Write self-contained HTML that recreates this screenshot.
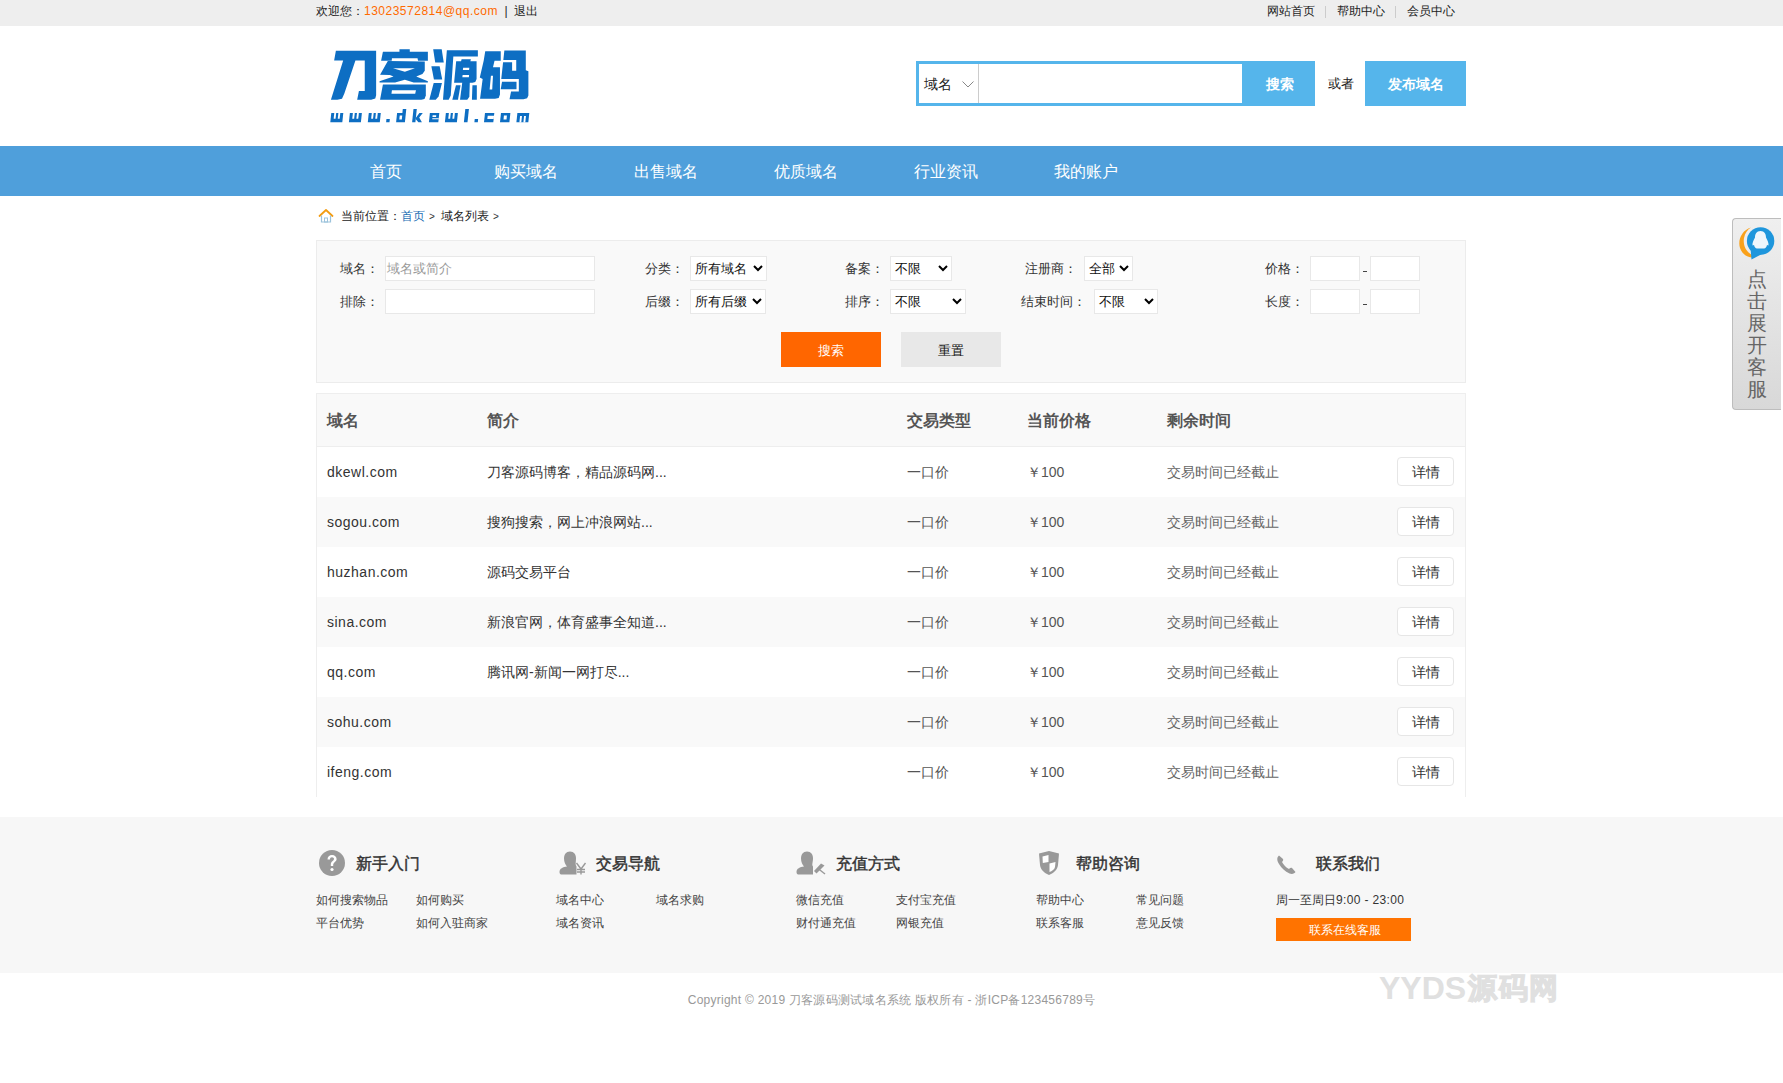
<!DOCTYPE html>
<html><head><meta charset="utf-8">
<style>
*{margin:0;padding:0;box-sizing:border-box}
html,body{width:1783px;height:1083px;overflow:hidden;background:#fff}
body{position:relative;font-family:"Liberation Sans",sans-serif;color:#333}
.a{position:absolute;white-space:nowrap}
.nv{position:absolute;top:147px;height:50px;line-height:50px;font-size:16px;color:#fff;width:140px;text-align:center}
.lb{position:absolute;font-size:13px;line-height:25px;color:#333;white-space:nowrap}
.inp{position:absolute;height:25px;background:#fff;border:1px solid #e8e8e8}
.sel{position:absolute;height:25px;background:#fff;border:1px solid #e8e8e8;font-size:13px;line-height:23px;color:#111;padding-left:4px;white-space:nowrap}
.sel svg{position:absolute;top:8px}
.th{position:absolute;font-size:16px;font-weight:bold;color:#555;line-height:54px;white-space:nowrap}
.td{position:absolute;font-size:14px;color:#666;line-height:50px;white-space:nowrap}
.dm{color:#333;letter-spacing:0.5px}
.ds{color:#333}
.btn{position:absolute;left:1080px;top:10px;width:57px;height:29px;border:1px solid #e6e6e6;border-radius:4px;background:#fff;font-size:14px;line-height:29px;text-align:center;color:#333}
.fh{position:absolute;top:854px;font-size:16px;color:#333;line-height:20px;-webkit-text-stroke:0.45px #333;white-space:nowrap}
.fl{position:absolute;font-size:12px;color:#444;line-height:16px;white-space:nowrap}
</style></head><body>
<div class="a" style="left:0;top:0;width:1783px;height:26px;background:#eee"></div>
<div class="a" style="left:316px;top:-1px;font-size:12px;line-height:24px;color:#222">欢迎您：<span style="color:#ff6a00;letter-spacing:0.5px">13023572814@qq.com</span> &nbsp;|&nbsp; 退出</div>
<div class="a" style="left:1267px;top:-1px;font-size:12px;line-height:24px;color:#222">网站首页</div>
<div class="a" style="left:1337px;top:-1px;font-size:12px;line-height:24px;color:#222">帮助中心</div>
<div class="a" style="left:1407px;top:-1px;font-size:12px;line-height:24px;color:#222">会员中心</div>
<div class="a" style="left:1325px;top:6px;width:1px;height:12px;background:#ccc"></div>
<div class="a" style="left:1395px;top:6px;width:1px;height:12px;background:#ccc"></div>
<svg class="a" style="left:320px;top:40px" width="220" height="70" viewBox="320 40 220 70"><polygon points="335.88,50.83 376.13,50.83 376.13,95.18 375.26,98.38 371.17,99.84 357.17,99.84 358.92,91.09 364.76,91.09 364.76,60.46 355.42,60.46 344.34,93.42 342.00,98.68 337.33,99.84 330.92,99.84 343.17,60.46 334.13,60.46" fill="#0d6ec3"/><polygon points="382.91,51.68 399.45,51.68 399.45,49.36 409.78,49.36 409.78,51.68 427.87,51.68 427.87,60.73 418.05,60.73 417.53,58.14 391.95,58.14 391.70,60.73 381.10,60.73" fill="#0d6ec3"/><polygon points="387.82,60.99 424.77,61.50 424.77,70.81 422.44,73.91 416.24,76.49 427.87,81.14 427.87,82.43 413.66,82.43 404.87,79.85 395.05,82.43 379.55,82.43 379.55,81.14 393.50,76.49 389.89,74.94 380.07,74.68" fill="#0d6ec3"/><polygon points="392.99,68.22 414.95,68.22 404.87,71.84" fill="#fff"/><polygon points="382.91,84.50 425.80,84.50 425.80,95.61 424.51,98.97 421.41,99.75 380.07,99.75" fill="#0d6ec3"/><polygon points="391.95,90.19 415.98,90.19 415.21,93.80 391.44,93.80" fill="#fff"/><polygon points="433.17,49.36 441.70,49.36 443.76,62.54 435.24,62.54" fill="#0d6ec3"/><polygon points="431.36,66.16 439.63,66.16 442.21,79.59 433.94,79.59" fill="#0d6ec3"/><polygon points="433.68,82.95 441.95,82.95 438.59,96.39 435.75,99.75 429.29,99.75" fill="#0d6ec3"/><polygon points="446.86,50.13 477.87,50.13 477.87,56.59 453.32,56.59 450.74,95.61 448.67,99.75 442.99,99.75" fill="#0d6ec3"/><polygon points="456.17,61.25 461.07,61.25 461.59,59.18 470.89,59.18 470.38,61.25 476.58,61.25 476.58,79.07 475.29,81.92 472.44,82.69 454.10,82.69" fill="#0d6ec3"/><polygon points="463.14,67.71 469.34,67.71 469.09,70.03 462.88,70.03" fill="#fff"/><polygon points="462.63,74.94 469.09,74.94 468.83,77.27 462.37,77.27" fill="#fff"/><polygon points="455.91,85.28 460.56,85.28 457.97,99.75 452.29,99.75" fill="#0d6ec3"/><polygon points="462.63,79.59 469.86,79.59 469.34,96.65 467.28,99.75 460.04,99.75" fill="#0d6ec3"/><polygon points="472.44,85.28 476.84,85.28 476.84,99.75 471.93,99.75" fill="#0d6ec3"/><polygon points="485.24,51.17 500.74,51.17 500.74,60.73 494.54,60.73 492.99,67.19 499.96,67.19 499.96,94.58 498.67,97.94 495.05,98.71 480.07,98.71 482.65,79.07 479.81,77.52 483.68,60.73" fill="#0d6ec3"/><polygon points="490.92,75.72 492.99,75.72 492.21,89.41 489.63,89.41" fill="#fff"/><polygon points="504.36,50.39 525.80,50.39 525.80,70.29 528.39,71.32 528.39,95.61 527.10,98.20 523.48,99.23 509.52,99.23 511.07,91.48 518.83,91.48 518.83,79.07 501.26,79.07" fill="#0d6ec3"/><polygon points="503.06,59.95 516.24,59.95 516.24,70.81 512.11,70.81 512.11,62.28 502.81,62.28" fill="#fff"/><polygon points="502.03,81.66 516.50,81.66 516.50,89.15 500.74,89.15" fill="#0d6ec3"/></svg>
<svg class="a" style="left:320px;top:100px" width="220" height="30" viewBox="320 100 220 30"><polygon points="331.29,112.90 343.29,112.90 342.30,122.30 330.30,122.30" fill="#0d6ec3"/><polygon points="334.30,112.80 336.20,112.80 335.57,118.80 333.67,118.80" fill="#fff"/><polygon points="338.40,112.80 340.30,112.80 339.67,118.80 337.77,118.80" fill="#fff"/><polygon points="349.89,112.90 361.89,112.90 360.90,122.30 348.90,122.30" fill="#0d6ec3"/><polygon points="352.90,112.80 354.80,112.80 354.17,118.80 352.27,118.80" fill="#fff"/><polygon points="357.00,112.80 358.90,112.80 358.27,118.80 356.37,118.80" fill="#fff"/><polygon points="368.79,112.90 380.79,112.90 379.80,122.30 367.80,122.30" fill="#0d6ec3"/><polygon points="371.80,112.80 373.70,112.80 373.07,118.80 371.17,118.80" fill="#fff"/><polygon points="375.90,112.80 377.80,112.80 377.17,118.80 375.27,118.80" fill="#fff"/><polygon points="386.44,119.10 389.84,119.10 389.50,122.30 386.10,122.30" fill="#0d6ec3"/><polygon points="397.09,112.90 405.89,112.90 404.90,122.30 396.10,122.30" fill="#0d6ec3"/><polygon points="402.79,109.10 406.29,109.10 405.87,113.10 402.37,113.10" fill="#0d6ec3"/><polygon points="399.73,115.40 402.23,115.40 401.80,119.40 399.30,119.40" fill="#fff"/><polygon points="413.49,109.10 416.79,109.10 415.40,122.30 412.10,122.30" fill="#0d6ec3"/><polygon points="415.75,118.00 419.39,112.90 422.79,112.90 419.22,117.40 421.90,122.30 418.40,122.30 415.66,118.90" fill="#0d6ec3"/><polygon points="429.89,112.90 439.29,112.90 438.30,122.30 428.90,122.30" fill="#0d6ec3"/><polygon points="432.64,115.30 436.24,115.30 436.06,117.00 432.46,117.00" fill="#fff"/><polygon points="432.33,118.20 438.83,118.20 438.72,119.30 432.22,119.30" fill="#fff"/><polygon points="445.89,112.90 457.89,112.90 456.90,122.30 444.90,122.30" fill="#0d6ec3"/><polygon points="448.90,112.80 450.80,112.80 450.17,118.80 448.27,118.80" fill="#fff"/><polygon points="453.00,112.80 454.90,112.80 454.27,118.80 452.37,118.80" fill="#fff"/><polygon points="465.31,108.90 468.91,108.90 467.50,122.30 463.90,122.30" fill="#0d6ec3"/><polygon points="474.74,119.10 478.14,119.10 477.80,122.30 474.40,122.30" fill="#0d6ec3"/><polygon points="484.99,112.90 494.29,112.90 493.30,122.30 484.00,122.30" fill="#0d6ec3"/><polygon points="487.69,115.70 494.09,115.70 493.74,119.10 487.34,119.10" fill="#fff"/><polygon points="500.99,112.90 510.39,112.90 509.40,122.30 500.00,122.30" fill="#0d6ec3"/><polygon points="503.93,115.40 506.93,115.40 506.50,119.40 503.50,119.40" fill="#fff"/><polygon points="517.39,112.90 529.29,112.90 528.30,122.30 516.40,122.30" fill="#0d6ec3"/><polygon points="520.06,116.00 521.96,116.00 521.29,122.40 519.39,122.40" fill="#fff"/><polygon points="524.06,116.00 525.96,116.00 525.29,122.40 523.39,122.40" fill="#fff"/></svg>
<div class="a" style="left:916px;top:61px;width:399px;height:45px;background:#55b5eb"></div>
<div class="a" style="left:919px;top:64px;width:323px;height:39px;background:#fff"></div>
<div class="a" style="left:978px;top:64px;width:1px;height:39px;background:#ccc"></div>
<div class="a" style="left:924px;top:74px;font-size:14px;line-height:20px;color:#222">域名</div>
<svg class="a" style="left:962px;top:81px" width="12" height="7" viewBox="0 0 12 7"><path d="M0.5 0.5 L6 6 L11.5 0.5" fill="none" stroke="#888" stroke-width="1"/></svg>
<div class="a" style="left:1266px;top:74px;font-size:14px;line-height:20px;color:#fff;font-weight:bold">搜索</div>
<div class="a" style="left:1328px;top:74px;font-size:12.5px;line-height:20px;color:#222">或者</div>
<div class="a" style="left:1365px;top:61px;width:101px;height:45px;background:#55b5eb;color:#fff;font-size:14px;font-weight:bold;line-height:46px;text-align:center">发布域名</div>
<div class="a" style="left:0;top:146px;width:1783px;height:50px;background:#4f9fdb"></div>
<div class="nv" style="left:316px">首页</div>
<div class="nv" style="left:456px">购买域名</div>
<div class="nv" style="left:596px">出售域名</div>
<div class="nv" style="left:736px">优质域名</div>
<div class="nv" style="left:876px">行业资讯</div>
<div class="nv" style="left:1016px">我的账户</div>
<svg class="a" style="left:318px;top:208px" width="16" height="16" viewBox="0 0 16 16"><path d="M1.5 8 L8 2 L14.5 8" fill="none" stroke="#f39c12" stroke-width="1.8" stroke-linecap="round" stroke-linejoin="round"/><path d="M3.5 7.5 V14 H12.5 V7.5" fill="none" stroke="#9cc3dc" stroke-width="1.2"/><rect x="6.5" y="10" width="3" height="4" fill="none" stroke="#9cc3dc" stroke-width="1"/></svg>
<div class="a" style="left:341px;top:206px;font-size:12px;line-height:20px;color:#222">当前位置：</div>
<div class="a" style="left:401px;top:206px;font-size:12px;line-height:20px;color:#1f6fb5">首页</div>
<div class="a" style="left:429px;top:206px;font-size:10px;line-height:21px;color:#333">&gt;</div>
<div class="a" style="left:441px;top:206px;font-size:12px;line-height:20px;color:#222">域名列表</div>
<div class="a" style="left:493px;top:206px;font-size:10px;line-height:21px;color:#333">&gt;</div>
<div class="a" style="left:316px;top:240px;width:1150px;height:143px;background:#f9f9f9;border:1px solid #ececec"></div>
<div class="lb" style="left:340px;top:256px">域名：</div>
<div class="lb" style="left:340px;top:289px">排除：</div>
<div class="lb" style="left:645px;top:256px">分类：</div>
<div class="lb" style="left:645px;top:289px">后缀：</div>
<div class="lb" style="left:845px;top:256px">备案：</div>
<div class="lb" style="left:845px;top:289px">排序：</div>
<div class="lb" style="left:1025px;top:256px">注册商：</div>
<div class="lb" style="left:1021px;top:289px">结束时间：</div>
<div class="lb" style="left:1265px;top:256px">价格：</div>
<div class="lb" style="left:1265px;top:289px">长度：</div>
<div class="inp" style="left:385px;top:256px;width:210px"><span style="position:absolute;left:1px;top:0;font-size:13px;line-height:23px;color:#999">域名或简介</span></div>
<div class="inp" style="left:385px;top:289px;width:210px"></div>
<div class="sel" style="left:690px;top:256px;width:77px">所有域名<svg style="left:62px" width="10" height="7" viewBox="0 0 10 7"><path d="M1 1 L5 5 L9 1" fill="none" stroke="#000" stroke-width="2"/></svg></div>
<div class="sel" style="left:690px;top:289px;width:76px">所有后缀<svg style="left:61px" width="10" height="7" viewBox="0 0 10 7"><path d="M1 1 L5 5 L9 1" fill="none" stroke="#000" stroke-width="2"/></svg></div>
<div class="sel" style="left:890px;top:256px;width:62px">不限<svg style="left:47px" width="10" height="7" viewBox="0 0 10 7"><path d="M1 1 L5 5 L9 1" fill="none" stroke="#000" stroke-width="2"/></svg></div>
<div class="sel" style="left:890px;top:289px;width:76px">不限<svg style="left:61px" width="10" height="7" viewBox="0 0 10 7"><path d="M1 1 L5 5 L9 1" fill="none" stroke="#000" stroke-width="2"/></svg></div>
<div class="sel" style="left:1084px;top:256px;width:49px">全部<svg style="left:34px" width="10" height="7" viewBox="0 0 10 7"><path d="M1 1 L5 5 L9 1" fill="none" stroke="#000" stroke-width="2"/></svg></div>
<div class="sel" style="left:1094px;top:289px;width:64px">不限<svg style="left:49px" width="10" height="7" viewBox="0 0 10 7"><path d="M1 1 L5 5 L9 1" fill="none" stroke="#000" stroke-width="2"/></svg></div>
<div class="inp" style="left:1310px;top:256px;width:50px"></div>
<div class="inp" style="left:1370px;top:256px;width:50px"></div>
<div class="a" style="left:1363px;top:271px;width:4px;height:1px;background:#444"></div>
<div class="inp" style="left:1310px;top:289px;width:50px"></div>
<div class="inp" style="left:1370px;top:289px;width:50px"></div>
<div class="a" style="left:1363px;top:304px;width:4px;height:1px;background:#444"></div>
<div class="a" style="left:781px;top:332px;width:100px;height:35px;background:#ff6600;color:#fff;font-size:13px;line-height:37px;text-align:center">搜索</div>
<div class="a" style="left:901px;top:332px;width:100px;height:35px;background:#e8e8e8;color:#111;font-size:13px;line-height:37px;text-align:center">重置</div>
<div class="a" style="left:316px;top:393px;width:1150px;height:404px;border:1px solid #eee;border-bottom:none"></div>
<div class="a" style="left:317px;top:394px;width:1148px;height:53px;background:#f9f9f9;border-bottom:1px solid #eee">
  <div class="th" style="left:10px">域名</div>
  <div class="th" style="left:170px">简介</div>
  <div class="th" style="left:590px">交易类型</div>
  <div class="th" style="left:710px">当前价格</div>
  <div class="th" style="left:850px">剩余时间</div>
</div>
<div class="a" style="left:317px;top:447px;width:1148px;height:50px;background:#fff">
  <div class="td dm" style="left:10px">dkewl.com</div>
  <div class="td ds" style="left:170px">刀客源码博客，精品源码网...</div>
  <div class="td" style="left:590px;color:#555">一口价</div>
  <div class="td" style="left:710px;color:#555">￥100</div>
  <div class="td" style="left:850px">交易时间已经截止</div>
  <div class="btn">详情</div>
</div>
<div class="a" style="left:317px;top:497px;width:1148px;height:50px;background:#f9f9f9">
  <div class="td dm" style="left:10px">sogou.com</div>
  <div class="td ds" style="left:170px">搜狗搜索，网上冲浪网站...</div>
  <div class="td" style="left:590px;color:#555">一口价</div>
  <div class="td" style="left:710px;color:#555">￥100</div>
  <div class="td" style="left:850px">交易时间已经截止</div>
  <div class="btn">详情</div>
</div>
<div class="a" style="left:317px;top:547px;width:1148px;height:50px;background:#fff">
  <div class="td dm" style="left:10px">huzhan.com</div>
  <div class="td ds" style="left:170px">源码交易平台</div>
  <div class="td" style="left:590px;color:#555">一口价</div>
  <div class="td" style="left:710px;color:#555">￥100</div>
  <div class="td" style="left:850px">交易时间已经截止</div>
  <div class="btn">详情</div>
</div>
<div class="a" style="left:317px;top:597px;width:1148px;height:50px;background:#f9f9f9">
  <div class="td dm" style="left:10px">sina.com</div>
  <div class="td ds" style="left:170px">新浪官网，体育盛事全知道...</div>
  <div class="td" style="left:590px;color:#555">一口价</div>
  <div class="td" style="left:710px;color:#555">￥100</div>
  <div class="td" style="left:850px">交易时间已经截止</div>
  <div class="btn">详情</div>
</div>
<div class="a" style="left:317px;top:647px;width:1148px;height:50px;background:#fff">
  <div class="td dm" style="left:10px">qq.com</div>
  <div class="td ds" style="left:170px">腾讯网-新闻一网打尽...</div>
  <div class="td" style="left:590px;color:#555">一口价</div>
  <div class="td" style="left:710px;color:#555">￥100</div>
  <div class="td" style="left:850px">交易时间已经截止</div>
  <div class="btn">详情</div>
</div>
<div class="a" style="left:317px;top:697px;width:1148px;height:50px;background:#f9f9f9">
  <div class="td dm" style="left:10px">sohu.com</div>
  <div class="td" style="left:590px;color:#555">一口价</div>
  <div class="td" style="left:710px;color:#555">￥100</div>
  <div class="td" style="left:850px">交易时间已经截止</div>
  <div class="btn">详情</div>
</div>
<div class="a" style="left:317px;top:747px;width:1148px;height:50px;background:#fff">
  <div class="td dm" style="left:10px">ifeng.com</div>
  <div class="td" style="left:590px;color:#555">一口价</div>
  <div class="td" style="left:710px;color:#555">￥100</div>
  <div class="td" style="left:850px">交易时间已经截止</div>
  <div class="btn">详情</div>
</div>
<div class="a" style="left:0;top:817px;width:1783px;height:156px;background:#f7f7f7"></div>
<svg class="a" style="left:318px;top:849px" width="28" height="28" viewBox="0 0 28 28"><circle cx="14" cy="14" r="13" fill="#999"/><path d="M9.5 10.5 C9.5 7.5 11.5 6 14 6 C16.8 6 18.6 7.7 18.6 10 C18.6 12.6 15.4 13.3 15.2 15.8 L15.2 17 L12.8 17 L12.8 15.5 C12.8 12.5 16 11.8 16 10.1 C16 9 15.2 8.3 14 8.3 C12.7 8.3 12 9.1 12 10.5 Z" fill="#fff"/><circle cx="14" cy="20.5" r="1.6" fill="#fff"/></svg>
<div class="fh" style="left:356px">新手入门</div>
<div class="fl" style="left:316px;top:892px">如何搜索物品</div>
<div class="fl" style="left:416px;top:892px">如何购买</div>
<div class="fl" style="left:316px;top:915px">平台优势</div>
<div class="fl" style="left:416px;top:915px">如何入驻商家</div>
<svg class="a" style="left:557px;top:850px" width="30" height="26" viewBox="0 0 30 26"><path d="M13 1.5 C9 1.5 7 4.5 7 8.5 C7 12 8.5 15 10 16.5 C6 17 2.5 18.5 2.5 22 C2.5 24 3.5 24.5 5 24.5 L19.5 24.5 L19.5 16.5 C18 15 19 12 19 8.5 C19 4.5 17 1.5 13 1.5 Z" fill="#999"/><path d="M19.5 13 L24 19 L28.5 13 M24 19 V24.5 M20 19.5 H28 M20 22 H28" stroke="#999" stroke-width="1.4" fill="none"/></svg>
<div class="fh" style="left:596px">交易导航</div>
<div class="fl" style="left:556px;top:892px">域名中心</div>
<div class="fl" style="left:656px;top:892px">域名求购</div>
<div class="fl" style="left:556px;top:915px">域名资讯</div>
<svg class="a" style="left:796px;top:850px" width="30" height="26" viewBox="0 0 30 26"><path d="M11 1.5 C7 1.5 5 4.5 5 8.5 C5 12 6.5 15 8 16.5 C4 17 0.5 18.5 0.5 22 C0.5 24 1.5 24.5 3 24.5 L17 24.5 L17 16.5 C15.5 15 17 12 17 8.5 C17 4.5 15 1.5 11 1.5 Z" fill="#999"/><path d="M18 21 L25 13.5 L28.5 15.5 L20.5 23.5 Z" fill="#999"/><path d="M22 18.5 L29 24" stroke="#999" stroke-width="1.4"/></svg>
<div class="fh" style="left:836px">充值方式</div>
<div class="fl" style="left:796px;top:892px">微信充值</div>
<div class="fl" style="left:896px;top:892px">支付宝充值</div>
<div class="fl" style="left:796px;top:915px">财付通充值</div>
<div class="fl" style="left:896px;top:915px">网银充值</div>
<svg class="a" style="left:1037px;top:850px" width="24" height="26" viewBox="0 0 24 26"><path d="M12 1 L22 3.5 L21 15 C20.5 20 16 23.5 12 25 C8 23.5 3.5 20 3 15 L2 3.5 Z" fill="#999"/><path d="M5.5 6.5 L11.5 5 L11.5 12 L5.8 13 Z M12.5 13.5 L18.5 12 L18 17 C17.5 19.5 15 21 12.5 22 Z" fill="#fff"/></svg>
<div class="fh" style="left:1076px">帮助咨询</div>
<div class="fl" style="left:1036px;top:892px">帮助中心</div>
<div class="fl" style="left:1136px;top:892px">常见问题</div>
<div class="fl" style="left:1036px;top:915px">联系客服</div>
<div class="fl" style="left:1136px;top:915px">意见反馈</div>
<svg class="a" style="left:1276px;top:853px" width="22" height="22" viewBox="0 0 22 22"><path d="M3 2.5 C1 4 0.5 7 3 11 C5.5 15 9 18.5 13.5 20.5 C16.5 21.5 18.5 20.5 19.5 19 L16 15 C15 14.5 14 15 13 16 C10 14.5 7.5 11.5 6 9 C7 8 7.5 7 7 6 Z" fill="#999"/></svg>
<div class="fh" style="left:1316px">联系我们</div>
<div class="fl" style="left:1276px;top:892px;color:#333">周一至周日<span style="letter-spacing:0.35px">9:00 - 23:00</span></div>
<div class="a" style="left:1276px;top:918px;width:135px;height:23px;background:#ff7300;color:#fff;font-size:12px;line-height:25px;text-align:center;padding-left:3px">联系在线客服</div>
<div class="a" style="left:0;top:990px;width:1783px;text-align:center;font-size:12px;line-height:20px;color:#999;letter-spacing:0.25px">Copyright © 2019 刀客源码测试域名系统 版权所有 - 浙ICP备123456789号</div>
<div class="a" style="left:1379px;top:968px;font-size:32px;line-height:40px;font-weight:bold;color:#e0e0e0">YYDS<span style="font-size:29px;-webkit-text-stroke:1.2px #e0e0e0;position:relative;top:-1px;left:2px;letter-spacing:1.5px">源码网</span></div>
<div class="a" style="left:1732px;top:218px;width:49px;height:192px;border:1px solid #bdbdbd;border-right:none;border-radius:4px 0 0 4px;background:linear-gradient(#efefef,#d8d8d8)"></div>
<svg class="a" style="left:1732px;top:218px" width="51" height="48" viewBox="0 0 51 48">
  <path d="M19 9.5 C10 12 5.5 22 8 30 C10 36 15 39.5 20.5 39.5 C21.5 38 20.5 37 18.5 36 C13 32 11 26 12 20 C13 15 15.5 11.5 19 9.5 Z" fill="#f9a11b"/>
  <circle cx="28.6" cy="23" r="13.7" fill="#1e96dc"/>
  <path d="M18.5 30 L19.5 41.6 L30 36 Z" fill="#1e96dc"/>
  <path d="M28.5 13 C24.5 13 23 16 23 19.5 C22 21.5 20 25 20.5 27.5 L22 27 C22.5 29 23.5 30.6 25 30.6 L32 30.6 C33.5 30.6 34.5 29 35 27 L36.5 27.5 C37 25 35 21.5 34 19.5 C34 16 32.5 13 28.5 13 Z" fill="#eef6fc"/>
</svg>
<div class="a" style="left:1746px;top:269px;width:22px;font-size:20px;line-height:21.9px;color:#666;white-space:normal;text-align:center">点击展开客服</div>
</body></html>
